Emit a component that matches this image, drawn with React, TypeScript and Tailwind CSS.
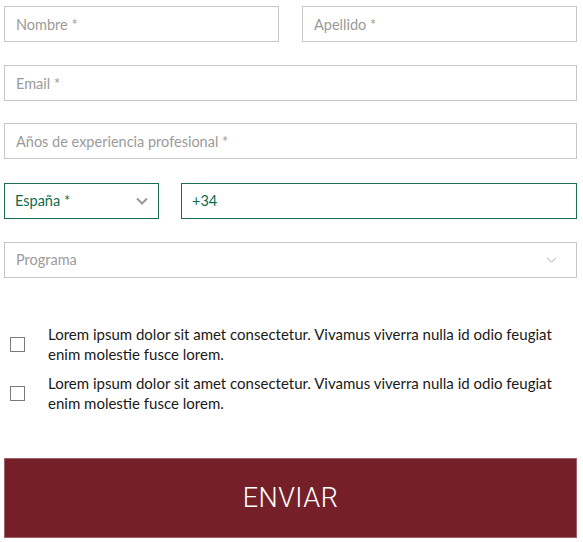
import React, { useState } from "react";

const font = { fontFamily: "Lato, 'Open Sans', sans-serif" };

function Field({ placeholder, className = "" }: { placeholder: string; className?: string }) {
  return (
    <input
      type="text"
      placeholder={placeholder}
      className={`h-9 w-full border border-[#c6c6c6] bg-white px-[11px] text-[14.5px] text-[#222] placeholder:text-[#9b9b9b] outline-none ${className}`}
    />
  );
}

function Chevron({ className = "", strokeWidth = 1 }: { className?: string; strokeWidth?: number }) {
  return (
    <svg viewBox="0 0 12 7" className={className} fill="none" stroke="currentColor" strokeWidth={strokeWidth}>
      <path d="M1 1l5 5 5-5" />
    </svg>
  );
}

function Check({ text }: { text: string }) {
  const [on, setOn] = useState(false);
  return (
    <label className="flex items-center cursor-pointer">
      <span className="w-[44px] shrink-0 pl-[6px]">
        <span
          onClick={() => setOn(!on)}
          className={`block h-[15px] w-[15px] border border-[#7a7a7a] ${on ? "bg-[#0d6b4d]" : "bg-white"}`}
        />
      </span>
      <span className="max-w-[520px] text-[15px] leading-[20px] text-[#1a1a1a]">{text}</span>
    </label>
  );
}

export default function App() {
  const lorem =
    "Lorem ipsum dolor sit amet consectetur. Vivamus viverra nulla id odio feugiat enim molestie fusce lorem.";
  return (
    <div style={font} className="w-[583px] bg-white pl-[4px] pr-[6px] pt-[6px] pb-[4px]">
      <div className="flex flex-col gap-[23px]">
        <div className="grid grid-cols-2 gap-[23px]">
          <Field placeholder="Nombre *" />
          <Field placeholder="Apellido *" />
        </div>
        <Field placeholder="Email *" />
        <Field placeholder="Años de experiencia profesional *" className="-mt-px" />
        <div className="flex gap-[22px] pt-[1px]">
          <div className="flex h-9 w-[155px] shrink-0 items-center justify-between border border-[#1b6e52] pl-[10px] pr-[10px]">
            <span className="text-[14.5px] text-[#0d6b4d]">España *</span>
            <Chevron className="h-[8px] w-[12px] text-[#9a9a9a]" strokeWidth={2} />
          </div>
          <div className="flex h-9 flex-1 items-center border border-[#1b6e52] px-[10px]">
            <span className="text-[14.5px] text-[#0d6b4d]">+34</span>
          </div>
        </div>
        <div className="flex h-9 items-center justify-between border border-[#c6c6c6] pl-[11px] pr-[19px]">
          <span className="text-[14.5px] text-[#9b9b9b]">Programa</span>
          <Chevron className="h-[6px] w-[11px] text-[#9a9a9a]" />
        </div>
      </div>
      <div className="mt-[46px] flex flex-col gap-[9px]">
        <Check text={lorem} />
        <Check text={lorem} />
      </div>
      <button
        className="mt-[45px] flex h-[80px] w-full items-center justify-center border border-[#a06068] bg-[#752029] text-[27px] font-light tracking-[0.5px] text-white"
        style={{ fontFamily: "Roboto, sans-serif" }}
      >
        ENVIAR
      </button>
    </div>
  );
}
